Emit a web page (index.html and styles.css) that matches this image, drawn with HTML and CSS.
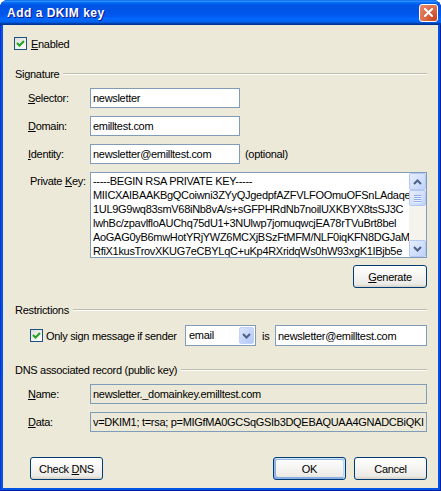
FILE: index.html
```html
<!DOCTYPE html>
<html lang="en">

<head>
    <meta charset="UTF-8">
    <title>Add a DKIM key</title>
    <link rel="stylesheet" href="styles.css">
</head>

<body>
    <div class="window">
        <div class="titlebar">
            <span class="title">Add a DKIM key</span>
            <span class="close-btn">
                <svg width="9" height="9" viewBox="0 0 9 9"><path d="M1 1 L8 8 M8 1 L1 8" stroke="#fff" stroke-width="2" stroke-linecap="square"/></svg>
            </span>
        </div>

        <div class="dialog">
            <div class="check-row">
                <span class="check"><svg width="11" height="11" viewBox="0 0 11 11"><path d="M2 5 L4.5 7.5 L9 3" fill="none" stroke="#21a121" stroke-width="2"/></svg></span>
                <span><u>E</u>nabled</span>
            </div>

            <!-- Signature -->
            <div class="group-title"><span>Signature</span></div>
            <div class="field-row">
                <span class="field-label"><u>S</u>elector:</span>
                <input class="text-input short" type="text" value="newsletter">
            </div>
            <div class="field-row">
                <span class="field-label"><u>D</u>omain:</span>
                <input class="text-input short" type="text" value="emilltest.com">
            </div>
            <div class="field-row">
                <span class="field-label"><u>I</u>dentity:</span>
                <input class="text-input short" type="text" value="newsletter@emilltest.com">
                <span class="hint">(optional)</span>
            </div>
            <div class="key-row">
                <span class="field-label key-label">Private <u>K</u>ey:</span>
                <div class="key-box">
                    <div class="key-text">
                        <div>-----BEGIN RSA PRIVATE KEY-----</div>
                        <div>MIICXAIBAAKBgQCoiwni3ZYyQJgedpfAZFVLFOOmuOFSnLAdaqe</div>
                        <div>1UL9G9wq83smV68iNb8vA/s+sGFPHRdNb7noilUXKBYX8tsSJ3C</div>
                        <div>lwhBc/zpavlfloAUChq75dU1+3NUlwp7jomuqwcjEA78rTVuBrt8bel</div>
                        <div>AoGAG0yB6mwHotYRjYWZ6MCXjBSzFtMFM/NLF0iqKFN8DGJaM</div>
                        <div>RfiX1kusTrovXKUG7eCBYLqC+uKp4RXridqWs0hW93xgK1IBjb5e</div>
                    </div>
                    <div class="scrollbar">
                        <span class="sb-btn"><svg width="9" height="6" viewBox="0 0 9 6"><path d="M1 5 L4.5 1.5 L8 5" fill="none" stroke="#4d6185" stroke-width="2"/></svg></span>
                        <span class="sb-thumb"><i></i><i></i><i></i><i></i></span>
                        <span class="sb-track"></span>
                        <span class="sb-btn"><svg width="9" height="6" viewBox="0 0 9 6"><path d="M1 1 L4.5 4.5 L8 1" fill="none" stroke="#4d6185" stroke-width="2"/></svg></span>
                    </div>
                </div>
            </div>
            <div class="generate-row">
                <button class="btn generate"><u>G</u>enerate</button>
            </div>

            <!-- Restrictions -->
            <div class="group-title restrictions"><span>Restrictions</span></div>
            <div class="restrict-row">
                <div class="restrict-check">
                    <span class="check"><svg width="11" height="11" viewBox="0 0 11 11"><path d="M2 5 L4.5 7.5 L9 3" fill="none" stroke="#21a121" stroke-width="2"/></svg></span>
                    <span>Only sign message if sender</span>
                </div>
                <div class="select">
                    <span class="select-value">email</span>
                    <span class="select-btn"><svg width="9" height="6" viewBox="0 0 9 6"><path d="M1 1 L4.5 4.5 L8 1" fill="none" stroke="#4d6185" stroke-width="2"/></svg></span>
                </div>
                <span class="is-label">is</span>
                <input class="text-input sender" type="text" value="newsletter@emilltest.com">
            </div>

            <!-- DNS record -->
            <div class="group-title dns"><span>DNS associated record (public key)</span></div>
            <div class="field-row">
                <span class="field-label"><u>N</u>ame:</span>
                <input class="text-input readonly" type="text" readonly value="newsletter._domainkey.emilltest.com">
            </div>
            <div class="field-row">
                <span class="field-label"><u>D</u>ata:</span>
                <input class="text-input readonly" type="text" readonly value="v=DKIM1; t=rsa; p=MIGfMA0GCSqGSIb3DQEBAQUAA4GNADCBiQKI">
            </div>

            <div class="button-row">
                <button class="btn">Check <u>D</u>NS</button>
                <span class="spacer"></span>
                <button class="btn default">OK</button>
                <button class="btn">Cancel</button>
            </div>
        </div>
    </div>
</body>

</html>
```

FILE: styles.css
```css
body {
    margin: 0;
    font-family: "Liberation Sans", Arial, sans-serif;
    font-size: 11px;
    letter-spacing: -0.3px;
    color: #000;
    background: #fff;
}

.window {
    width: 441px;
    height: 491px;
    display: flex;
    flex-direction: column;
    background: #0054e3;
    border-radius: 8px 8px 0 0;
    box-shadow: inset 1px 0 #0831d9, inset -1px 0 #001ea0, inset 0 -1px #001ea0;
    overflow: hidden;
}

.titlebar {
    height: 25px;
    flex: none;
    display: flex;
    align-items: center;
    padding: 0 3px 0 7px;
    background: linear-gradient(to bottom, #0058ee 0%, #3593ff 4%, #288eff 6%, #127dff 8%, #036ffc 10%, #0262ee 14%, #0057e5 20%, #0054e3 24%, #0055eb 56%, #005bf5 66%, #026afe 76%, #0062ef 86%, #0052d6 92%, #0040ab 94%, #003092 100%);
}

.title {
    flex: 1;
    color: #fff;
    font-family: "Liberation Sans", sans-serif;
    font-weight: bold;
    font-size: 12px;
    letter-spacing: 0.5px;
    text-shadow: 1px 1px #0f1089;
}

.close-btn {
    width: 19px;
    height: 18px;
    box-sizing: border-box;
    display: flex;
    align-items: center;
    justify-content: center;
    border: 1px solid #fff;
    border-radius: 3px;
    background: radial-gradient(circle at 85% 85%, #cc4626 0%, #dc6f4c 55%, #e58c6c 100%);
}

.dialog {
    flex: 1;
    margin: 0 3px 3px 3px;
    background: #ece9d8;
    padding: 12px 11px 0 11px;
    display: flex;
    flex-direction: column;
}

.check-row {
    display: flex;
    align-items: center;
    gap: 4px;
    height: 13px;
}

.check {
    width: 13px;
    height: 13px;
    box-sizing: border-box;
    flex: none;
    display: flex;
    align-items: center;
    justify-content: center;
    border: 1px solid #1c5180;
    background: linear-gradient(135deg, #dcdcd7, #fff);
}

.group-title {
    display: flex;
    align-items: center;
    gap: 4px;
    height: 13px;
    margin: 17px 0 0 1px;
}

.group-title::after {
    content: "";
    flex: 1;
    border-top: 1px solid #bebdad;
    border-bottom: 1px solid #fff;
}

.group-title.restrictions {
    margin-top: 15px;
}

.field-row {
    display: flex;
    align-items: center;
    margin: 8px 0 0 14px;
}

.field-label {
    width: 62px;
    flex: none;
}

.text-input {
    height: 20px;
    box-sizing: border-box;
    border: 1px solid #7f9db9;
    background: #fff;
    padding: 0 2px;
    font: inherit;
    letter-spacing: inherit;
    color: #000;
    outline: none;
}

.text-input.short {
    width: 150px;
}

.text-input.readonly {
    flex: 1;
    min-width: 0;
    background: #ece9d8;
}

.hint {
    margin-left: 5px;
}

.key-row {
    display: flex;
    align-items: flex-start;
    margin: 8px 0 0 14px;
}

.key-label {
    padding: 3px 0 0 2px;
    box-sizing: border-box;
}

.key-box {
    flex: 1;
    height: 86px;
    box-sizing: border-box;
    border: 1px solid #7f9db9;
    background: #fff;
    display: flex;
    overflow: hidden;
}

.key-text {
    flex: 1;
    min-width: 0;
    overflow: hidden;
    white-space: nowrap;
    padding: 1px 0 0 2px;
    line-height: 14px;
}

.scrollbar {
    width: 17px;
    flex: none;
    display: flex;
    flex-direction: column;
    background: #f4f3ee;
}

.sb-btn,
.sb-thumb {
    height: 17px;
    box-sizing: border-box;
    flex: none;
    display: flex;
    align-items: center;
    justify-content: center;
    border: 1px solid #b4c8f6;
    border-radius: 2px;
    background: linear-gradient(135deg, #e6eefc, #c1d3fb);
}

.sb-thumb {
    height: 16px;
    flex-direction: column;
    gap: 1px;
}

.sb-thumb i {
    width: 7px;
    height: 1px;
    background: #8caaf0;
    border-bottom: 1px solid #eef4fe;
    margin-bottom: -1px;
}

.sb-track {
    flex: 1;
}

.generate-row {
    display: flex;
    justify-content: flex-end;
    margin-top: 7px;
}

.btn {
    width: 73px;
    height: 23px;
    box-sizing: border-box;
    border: 1px solid #003c74;
    border-radius: 3px;
    background: linear-gradient(180deg, #fff, #ecebe6 86%, #d6d0c5);
    font: inherit;
    letter-spacing: inherit;
    color: #000;
    padding: 0;
}

.btn.generate {
    width: 74px;
}

.btn.default {
    box-shadow: inset -1px 1px #cee7ff, inset 1px 2px #98b8ea, inset -2px 2px #bcd4f6, inset 1px -1px #89ade4, inset 2px -2px #89ade4;
}

.restrict-row {
    display: flex;
    align-items: center;
    height: 21px;
    margin: 9px 0 0 16px;
}

.restrict-check {
    width: 155px;
    flex: none;
    display: flex;
    align-items: center;
    gap: 3px;
    white-space: nowrap;
}

.select {
    width: 71px;
    height: 21px;
    box-sizing: border-box;
    flex: none;
    display: flex;
    border: 1px solid #7f9db9;
    background: #fff;
    padding: 1px;
}

.select-value {
    flex: 1;
    padding-left: 2px;
    line-height: 17px;
}

.select-btn {
    width: 15px;
    display: flex;
    align-items: center;
    justify-content: center;
    border: 1px solid #c3d3fd;
    border-radius: 2px;
    box-sizing: border-box;
    background: linear-gradient(135deg, #dae5fd, #b3c8f6);
}

.is-label {
    width: 19px;
    flex: none;
    padding-left: 6px;
    box-sizing: border-box;
}

.text-input.sender {
    flex: 1;
    min-width: 0;
    height: 21px;
}

.group-title.dns {
    margin-top: 17px;
}

.button-row {
    display: flex;
    gap: 8px;
    margin: 25px 0 0 16px;
}

.spacer {
    flex: 1;
}
```
